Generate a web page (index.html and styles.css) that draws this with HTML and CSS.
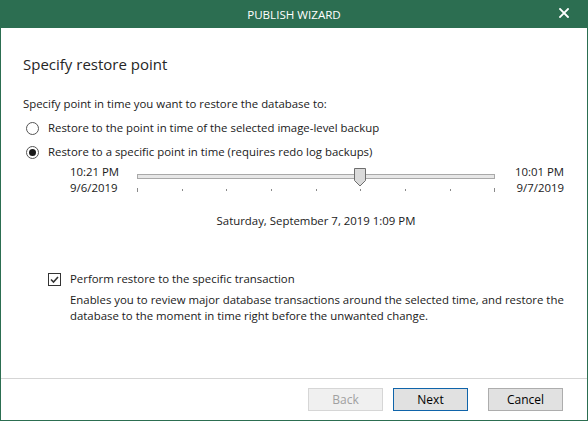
FILE: index.html
```html
<!DOCTYPE html>
<html lang="en">
<head>
<meta charset="utf-8">
<title>Publish Wizard</title>
<link rel="stylesheet" href="styles.css">
</head>
<body>
<div class="window">
  <header class="titlebar">
    <span class="title">PUBLISH WIZARD</span>
    <svg class="close" width="10" height="10" viewBox="0 0 10 10" aria-label="Close">
      <path d="M1 1 L9 9 M9 1 L1 9" stroke="#fff" stroke-width="1.8" stroke-linecap="square"/>
    </svg>
  </header>

  <main class="content">
    <h1 class="heading">Specify restore point</h1>

    <p class="row">Specify point in time you want to restore the database to:</p>

    <label class="row option">
      <span class="radio"></span>
      <span>Restore to the point in time of the selected image-level backup</span>
    </label>
    <label class="row option">
      <span class="radio checked"></span>
      <span>Restore to a specific point in time (requires redo log backups)</span>
    </label>

    <div class="slider">
      <div class="edge">
        <span>10:21 PM</span>
        <span>9/6/2019</span>
      </div>
      <svg class="track" width="360" height="32" viewBox="0 0 360 32">
        <rect x="1.5" y="8.5" width="357" height="4" fill="#e7e7e7" stroke="#a9a9a9"/>
        <g stroke="#8a8a8a" stroke-width="1">
          <line x1="1.5" y1="22" x2="1.5" y2="26"/>
          <line x1="46.5" y1="23" x2="46.5" y2="25"/>
          <line x1="90.5" y1="23" x2="90.5" y2="25"/>
          <line x1="135.5" y1="23" x2="135.5" y2="25"/>
          <line x1="180.5" y1="23" x2="180.5" y2="25"/>
          <line x1="224.5" y1="23" x2="224.5" y2="25"/>
          <line x1="269.5" y1="23" x2="269.5" y2="25"/>
          <line x1="314.5" y1="23" x2="314.5" y2="25"/>
          <line x1="358.5" y1="22" x2="358.5" y2="26"/>
        </g>
        <path d="M218.5 2.5 H229.5 V14.5 L224 20 L218.5 14.5 Z" fill="#dadada" stroke="#6e6e6e"/>
      </svg>
      <div class="edge end">
        <span>10:01 PM</span>
        <span>9/7/2019</span>
      </div>
      <p class="selected">Saturday, September 7, 2019 1:09 PM</p>
    </div>

    <label class="check-row">
      <span class="checkbox">
        <svg width="11" height="11" viewBox="0 0 11 11">
          <path d="M2 5.5 L4.5 8 L9 3" fill="none" stroke="#333" stroke-width="1.6"/>
        </svg>
      </span>
      <span>Perform restore to the specific transaction</span>
    </label>
    <p class="description">Enables you to review major database transactions around the selected time, and restore the database to the moment in time right before the unwanted change.</p>
  </main>

  <footer class="footer">
    <button class="btn" disabled>Back</button>
    <button class="btn default">Next</button>
    <button class="btn cancel">Cancel</button>
  </footer>
</div>
</body>
</html>
```

FILE: styles.css
```css
* {
  box-sizing: border-box;
}

html, body {
  margin: 0;
  height: 100%;
}

body {
  font-family: "Open Sans", "Noto Sans", sans-serif;
  font-size: 11.4px;
  color: #1a1a1a;
  background: #fff;
}

.window {
  width: 588px;
  height: 421px;
  display: flex;
  flex-direction: column;
  border: 1px solid #2c6e51;
  border-top: 0;
}

.titlebar {
  position: relative;
  height: 28px;
  margin: 0 -1px;
  background: #2c6e51;
  color: #fff;
  display: flex;
  align-items: center;
  justify-content: center;
  flex: none;
}

.title {
  font-size: 11.6px;
}

.close {
  position: absolute;
  right: 19px;
  top: 8px;
}

.content {
  flex: 1;
  padding: 26px 0 0 22px;
}

.heading {
  margin: 0 0 18px;
  font-size: 15px;
  font-weight: normal;
  line-height: 20px;
  color: #262626;
}

.row {
  margin: 0;
  height: 24px;
  line-height: 24px;
}

.option {
  display: flex;
  align-items: center;
  padding-left: 3px;
}

.radio {
  width: 13px;
  height: 13px;
  border: 1px solid #555;
  border-radius: 50%;
  margin-right: 9px;
  display: flex;
  align-items: center;
  justify-content: center;
  flex: none;
}

.radio.checked::after {
  content: "";
  width: 7px;
  height: 7px;
  border-radius: 50%;
  background: #1a1a1a;
}

.slider {
  display: grid;
  grid-template-columns: 66px 360px 1fr;
  margin-left: 47px;
  width: 494px;
  line-height: 16px;
}

.edge {
  display: flex;
  flex-direction: column;
}

.edge.end {
  align-items: flex-end;
}

.track {
  margin-top: 2px;
}

.selected {
  grid-column: 2;
  margin: 15px 0 0;
  text-align: center;
  line-height: 16px;
}

.check-row {
  display: flex;
  align-items: center;
  margin: 42px 0 0 25px;
  line-height: 16px;
}

.checkbox {
  width: 13px;
  height: 13px;
  border: 1px solid #333;
  margin-right: 9px;
  display: flex;
  align-items: center;
  justify-content: center;
}

.description {
  margin: 5px 0 0 47px;
  width: 500px;
  line-height: 16px;
}

.footer {
  flex: none;
  border-top: 1px solid #d5d5d5;
  display: flex;
  justify-content: flex-end;
  padding: 9px 24px 9px 0;
}

.btn {
  width: 75px;
  height: 23px;
  font: inherit;
  font-size: 12px;
  color: #000;
  background: #e1e1e1;
  border: 1px solid #adadad;
  margin-left: 10px;
  padding: 0;
}

.btn:disabled {
  color: #a0a0a0;
  background: #f0f0f0;
  border-color: #d6d6d6;
}

.btn.default {
  border-color: #0f64aa;
}

.btn.cancel {
  margin-left: 20px;
}
```
